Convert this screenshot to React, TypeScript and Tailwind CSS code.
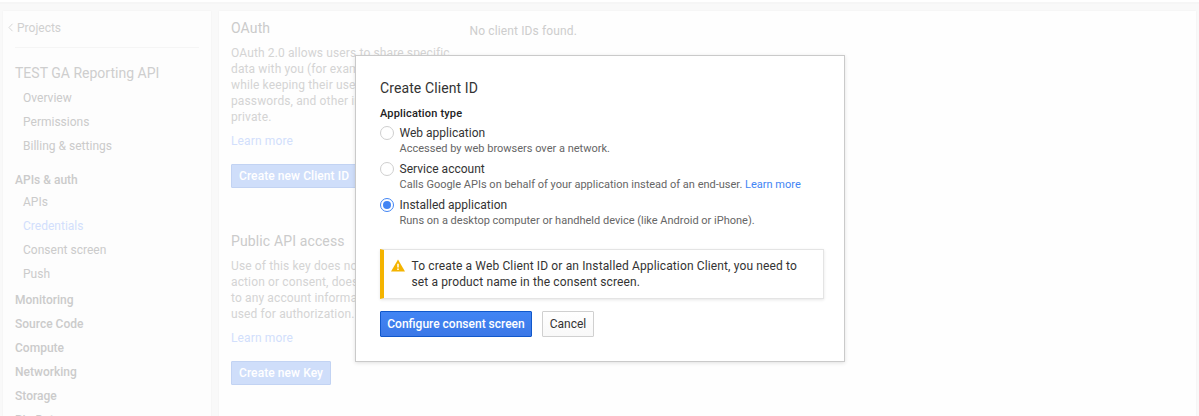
import React from "react";

type NavItem = { label: string; active?: boolean };

const projectLinks: NavItem[] = [
  { label: "Overview" },
  { label: "Permissions" },
  { label: "Billing & settings" },
];

const apiLinks: NavItem[] = [
  { label: "APIs" },
  { label: "Credentials", active: true },
  { label: "Consent screen" },
  { label: "Push" },
];

const sections = ["Monitoring", "Source Code", "Compute", "Networking", "Storage", "Big Data"];

function NavLinks({ items }: { items: NavItem[] }) {
  return (
    <ul className="pl-2">
      {items.map((item) => (
        <li
          key={item.label}
          className={item.active ? "h-6 leading-6 text-[#d2dffc]" : "h-6 leading-6"}
        >
          {item.label}
        </li>
      ))}
    </ul>
  );
}

function Sidebar() {
  return (
    <aside className="w-52 shrink-0 bg-[#fdfdfd] pl-3 text-[12px] tracking-[0.01px] text-[#cbcbcb] shadow-[0_0_2px_rgba(0,0,0,0.04)]">
      <div className="-ml-2 flex h-9 items-start">
        <svg className="mt-[12px] mr-[3px] h-[9px] w-[7px] shrink-0" viewBox="0 0 7 9" fill="none" stroke="#d6d6d6" strokeWidth="1">
          <path d="M5.5 0.8 2 4.5 5.5 8.2" />
        </svg>
        <span className="leading-[34px] text-[#d0d0d0]">Projects</span>
      </div>
      <div className="mr-3 border-t border-[#f5f5f5]" />
      <h2 className="mt-[13px] mb-px h-6 text-[14px] leading-6 text-[#cecece]">TEST GA Reporting API</h2>
      <NavLinks items={projectLinks} />
      <h3 className="mt-[10px] h-[22px] leading-6 font-medium">APIs &amp; auth</h3>
      <NavLinks items={apiLinks} />
      <ul className="mt-0.5 font-medium">
        {sections.map((s) => (
          <li key={s} className="h-6 leading-6">{s}</li>
        ))}
      </ul>
    </aside>
  );
}

function FadedButton({ children }: { children: React.ReactNode }) {
  return (
    <button className="flex h-6 items-center rounded-[1px] border border-[#c2d3f3] bg-[#cfdefa] px-[7px] text-[12px] font-medium tracking-[0.08px] whitespace-nowrap text-white">
      {children}
    </button>
  );
}

function Content() {
  return (
    <main className="flex grow bg-[#fefefe] pl-3 text-[12px] tracking-[0.13px] text-[#d4d4d4] shadow-[0_0_2px_rgba(0,0,0,0.04)]">
      <div className="flex w-[238.5px] shrink-0 flex-col items-start whitespace-nowrap">
        <h2 className="mt-[7px] h-5 text-[14px] leading-5 text-[#cbcbcb]">OAuth</h2>
        <p className="mt-[7px] leading-4">
          OAuth 2.0 allows users to share specific<br />
          data with you (for example, contact lists)<br />
          while keeping their usernames,<br />
          passwords, and other information<br />
          private.
        </p>
        <a className="mt-2 mb-[15px] leading-4 text-[#d2dffc]">Learn more</a>
        <FadedButton>Create new Client ID</FadedButton>
        <h2 className="mt-[43px] h-5 text-[14px] leading-5 text-[#cbcbcb]">Public API access</h2>
        <p className="mt-[7px] leading-4">
          Use of this key does not require any user<br />
          action or consent, does not grant access<br />
          to any account information, and is not<br />
          used for authorization.
        </p>
        <a className="mt-2 mb-[15px] leading-4 text-[#d2dffc]">Learn more</a>
        <FadedButton>Create new Key</FadedButton>
      </div>
      <p className="mt-[12px] leading-4 text-[#cdcdcd]">No client IDs found.</p>
    </main>
  );
}

type OptionProps = { title: string; checked?: boolean; children: React.ReactNode };

function Option({ title, checked, children }: OptionProps) {
  return (
    <label className="flex h-9 items-start">
      <span
        className={
          checked
            ? "mt-px flex size-[14px] shrink-0 items-center justify-center rounded-full border border-[#4285f4] bg-white"
            : "mt-px size-[14px] shrink-0 rounded-full border border-[#cfcfcf] bg-white"
        }
      >
        {checked && <span className="size-2 rounded-full bg-[#4285f4]" />}
      </span>
      <span className="ml-[5.5px] flex flex-col whitespace-nowrap">
        <span className="h-[17px] text-[12px] leading-[17px] tracking-[0.01px] text-[#333]">{title}</span>
        <span className="text-[11px] leading-[14px] text-[#666]">{children}</span>
      </span>
    </label>
  );
}

function CreateClientDialog() {
  return (
    <section className="absolute top-[55px] left-[355px] h-[307px] w-[490px] border border-[#cacaca] bg-white pt-[22px] pl-6 shadow-[0_1px_4px_rgba(0,0,0,0.12)]">
      <h1 className="h-5 text-[14px] leading-5 tracking-[0.1px] text-[#333]">Create Client ID</h1>
      <h2 className="mt-[8px] h-4 text-[11px] leading-4 font-medium tracking-[0.17px] text-[#222]">Application type</h2>
      <div className="mt-[3px]">
        <Option title="Web application">Accessed by web browsers over a network.</Option>
        <Option title="Service account">
          Calls Google APIs on behalf of your application instead of an end-user.{" "}
          <a className="text-[#4285f4]">Learn more</a>
        </Option>
        <Option title="Installed application" checked>
          Runs on a desktop computer or handheld device (like Android or iPhone).
        </Option>
      </div>
      <div className="mt-[16px] flex h-[50px] w-[444px] border border-l-4 border-[#e4e4e4] border-l-[#f4b400] pt-2 pl-[7px] shadow-[0_1px_3px_rgba(0,0,0,0.1)]">
        <svg className="mt-px h-[13px] w-[14px] shrink-0" viewBox="0 0 14 13">
          <path d="M7 0.5 14 12.5H0Z" fill="#f4b400" />
          <path d="M7 4.7v3.8M7 9.5v1.6" stroke="#fff" strokeWidth="1.5" />
        </svg>
        <p className="ml-[6.5px] text-[12px] leading-4 tracking-[0.13px] whitespace-nowrap text-[#333]">
          To create a Web Client ID or an Installed Application Client, you need to<br />
          set a product name in the consent screen.
        </p>
      </div>
      <div className="mt-3 flex gap-[10px] text-[12px]">
        <button className="flex h-[26px] w-[152px] items-center justify-center rounded-[1px] border border-[#1158cb] bg-linear-to-b from-[#4285f4] to-[#3b78e7] font-medium whitespace-nowrap text-white">
          Configure consent screen
        </button>
        <button className="flex h-[26px] w-[52px] items-center justify-center rounded-[1px] border border-[#d0d0d0] bg-linear-to-b from-white to-[#f8f8f8] text-[#333]">
          Cancel
        </button>
      </div>
    </section>
  );
}

export default function App() {
  return (
    <div className="relative h-[416px] w-full overflow-hidden bg-[#f9f9f9] font-['Roboto',sans-serif]">
      <div className="h-0.5 bg-white" />
      <div className="h-0.5 bg-[#f6f6f6]" />
      <div className="mt-[7px] flex h-[430px] gap-2 pr-[3px] pl-[3px]">
        <Sidebar />
        <Content />
      </div>
      <CreateClientDialog />
    </div>
  );
}
